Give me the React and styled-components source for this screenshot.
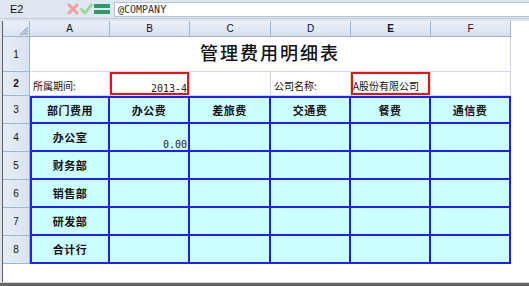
import React from 'react';
import styled, { createGlobalStyle, css } from 'styled-components';

const GlobalStyle = createGlobalStyle`
  html, body {
    margin: 0;
    padding: 0;
    background: #fff;
  }
  body {
    width: 529px;
    height: 286px;
    overflow: hidden;
    font-family: "Noto Sans CJK SC", "Liberation Sans", sans-serif;
  }
`;

const COLS = ['A', 'B', 'C', 'D', 'E', 'F'];
const HEADS = ['部门费用', '办公费', '差旅费', '交通费', '餐费', '通信费'];
const DEPTS = [
  { name: '办公室', values: { 1: '0.00' } },
  { name: '财务部' },
  { name: '销售部' },
  { name: '研发部' },
  { name: '合计行' },
];

const Window = styled.div`
  width: 529px;
  height: 286px;
  display: flex;
  flex-direction: column;
  background: #fff;
`;

// formula bar
const FormulaBar = styled.div`
  height: 18px;
  flex: none;
  display: flex;
  align-items: center;
  background: #dfe7f1;
  border-bottom: 1px solid #c3cedb;
`;

const NameBox = styled.div`
  width: 60px;
  box-sizing: border-box;
  padding-left: 10px;
  font: 11px "Liberation Sans", sans-serif;
  color: #111;
`;

const ToolIcons = styled.div`
  display: flex;
  align-items: center;
  gap: 1px;
  margin-left: 7px;
`;

const FormulaInput = styled.div`
  flex: 1;
  height: 15px;
  box-sizing: border-box;
  margin-left: 4px;
  padding-left: 3px;
  display: flex;
  align-items: center;
  background: #fff;
  border: 1px solid #b4c3d4;
  border-right: none;
  font: 10px "DejaVu Sans Mono", monospace;
  color: #333;
`;

const Frame = styled.div`
  flex: 1;
  display: flex;
  padding: 2px 0 0 2px;
  background: #dde4ec;
  min-height: 0;
`;

const Sheet = styled.div`
  flex: 1;
  display: grid;
  grid-template-columns: 27px 80px 80px 81px 80px 80px 80px 1fr;
  grid-template-rows: 16px 35px 24px repeat(6, 28px) 1fr;
  background: #fff;
  border-left: 1px solid #5c5c5c;
`;

const headBorder = css`
  box-sizing: border-box;
  border-right: 1px solid #9eb6ce;
  border-bottom: 1px solid #9eb6ce;
  display: flex;
  align-items: center;
  justify-content: center;
  font: 10px "Liberation Sans", sans-serif;
  color: #111;
`;

const Corner = styled.div`
  ${headBorder};
  position: relative;
  background: linear-gradient(#eaf0f8, #d9e4f1);
  svg {
    position: absolute;
    right: 1px;
    bottom: 1px;
  }
`;

const ColHead = styled.div`
  ${headBorder};
  background: linear-gradient(#eaf0f8, #d6e1ef);
  font-weight: ${(p) => (p.$active ? 700 : 400)};
`;

const RowHead = styled.div`
  ${headBorder};
  background: linear-gradient(90deg, #e6edf6, #d9e3f0);
  font-weight: ${(p) => (p.$active ? 700 : 400)};
`;

const Blank = styled.div`
  background: #fff;
`;

const Title = styled.div`
  grid-column: span 6;
  box-sizing: border-box;
  border-right: 1px solid #d0d7e5;
  border-bottom: 1px solid #d0d7e5;
  display: flex;
  align-items: center;
  justify-content: center;
  padding-bottom: 4px;
  font-size: 18px;
  font-weight: 500;
  letter-spacing: 2px;
  color: #111;
`;

const InfoCell = styled.div`
  box-sizing: border-box;
  border-right: 1px solid #d0d7e5;
  border-bottom: 1px solid #d0d7e5;
  display: flex;
  align-items: flex-end;
  justify-content: ${(p) => (p.$right ? 'flex-end' : 'flex-start')};
  padding: 0 3px 2px 3px;
  font-size: 10px;
  color: #111;
  white-space: nowrap;
  ${(p) => p.$marked && css`box-shadow: inset 0 0 0 2px #ee1111;`}
  ${(p) => p.$mono && css`font: 10px "DejaVu Sans Mono", monospace; padding: 0 2px 1px 0; color: #222;`}
`;

const TableCell = styled.div`
  box-sizing: border-box;
  background: #ccffff;
  border-right: 2px solid #1e1eff;
  border-bottom: 2px solid #1e1eff;
  ${(p) => p.$top && css`border-top: 2px solid #1e1eff;`}
  ${(p) => p.$left && css`border-left: 2px solid #1e1eff;`}
  display: flex;
  align-items: center;
  justify-content: center;
  font-size: 11px;
  font-weight: 700;
  color: #111;
  letter-spacing: 0.5px;
`;

const Amount = styled(TableCell)`
  align-items: flex-end;
  justify-content: flex-end;
  padding: 0 1px 0 0;
  font: 10px "DejaVu Sans Mono", monospace;
  color: #222;
  letter-spacing: 0;
`;

const Filler = styled.div`
  grid-column: 1 / -1;
  background: #fff;
`;

const Footer = styled.div`
  height: 3px;
  flex: none;
  border-top: 1px solid #d0d0d0;
  background: #666;
`;

const CancelIcon = () => (
  <svg width="12" height="12" viewBox="0 0 12 12">
    <path d="M2 2 L10 10 M10 2 L2 10" stroke="#f3a09b" strokeWidth="3" strokeLinecap="round" />
  </svg>
);

const CheckIcon = () => (
  <svg width="13" height="12" viewBox="0 0 13 12">
    <path d="M1.5 6.5 L5 10 L11.5 2" stroke="#9fd99f" strokeWidth="3" fill="none" strokeLinecap="round" strokeLinejoin="round" />
  </svg>
);

const EqualsIcon = () => (
  <svg width="16" height="12" viewBox="0 0 16 12">
    <rect x="0" y="1" width="16" height="4" fill="#2f9a6c" />
    <rect x="0" y="7" width="16" height="4" fill="#2f9a6c" />
  </svg>
);

const CornerMark = () => (
  <svg width="9" height="9" viewBox="0 0 9 9">
    <polygon points="9,0 9,9 0,9" fill="#c6d2e0" />
    <path d="M9 1 L1 9 M9 4 L4 9 M9 7 L7 9" stroke="#8ea2b8" strokeWidth="1" />
  </svg>
);

const App = () => {
  return (
    <Window>
      <GlobalStyle />
      <FormulaBar>
        <NameBox>E2</NameBox>
        <ToolIcons>
          <CancelIcon />
          <CheckIcon />
          <EqualsIcon />
        </ToolIcons>
        <FormulaInput>@COMPANY</FormulaInput>
      </FormulaBar>
      <Frame>
        <Sheet>
          <Corner>
            <CornerMark />
          </Corner>
          {COLS.map((c) => (
            <ColHead key={c} $active={c === 'E'}>{c}</ColHead>
          ))}
          <Blank />

          <RowHead>1</RowHead>
          <Title>管理费用明细表</Title>
          <Blank />

          <RowHead $active>2</RowHead>
          <InfoCell>所属期间:</InfoCell>
          <InfoCell $right $marked $mono>2013-4</InfoCell>
          <InfoCell />
          <InfoCell>公司名称:</InfoCell>
          <InfoCell $marked style={{ paddingLeft: 2 }}>A股份有限公司</InfoCell>
          <InfoCell />
          <Blank />

          <RowHead>3</RowHead>
          {HEADS.map((h, i) => (
            <TableCell key={h} $top $left={i === 0}>{h}</TableCell>
          ))}
          <Blank />

          {DEPTS.map((d, r) => (
            <React.Fragment key={d.name}>
              <RowHead>{r + 4}</RowHead>
              <TableCell $left>{d.name}</TableCell>
              {[1, 2, 3, 4, 5].map((i) =>
                d.values && d.values[i] ? (
                  <Amount key={i}>{d.values[i]}</Amount>
                ) : (
                  <TableCell key={i} />
                )
              )}
              <Blank />
            </React.Fragment>
          ))}
          <Filler />
        </Sheet>
      </Frame>
      <Footer />
    </Window>
  );
};

export default App;
